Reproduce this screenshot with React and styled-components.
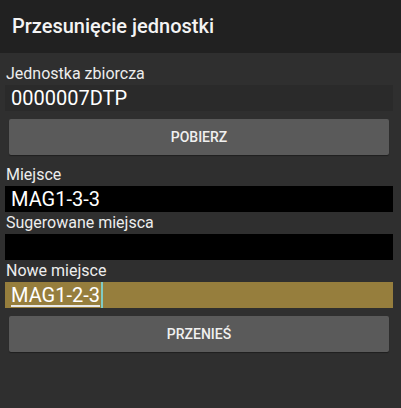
import styled, { createGlobalStyle } from 'styled-components'

const GlobalStyle = createGlobalStyle`
	html, body {
		margin: 0;
		padding: 0;
		background: #2f2f2f;
	}

	body {
		font-family: Roboto, 'Noto Sans', 'Liberation Sans', sans-serif;
		color: #f2f2f2;
	}
`

export default function App() {
	return (
		<Screen>
			<GlobalStyle />
			<Header>
				<h1>Przesunięcie jednostki</h1>
			</Header>

			<Content>
				<Label $first>Jednostka zbiorcza</Label>
				<Field $tone='plain'>
					<span>0000007DTP</span>
				</Field>
				<Button type='button'>POBIERZ</Button>

				<Label>Miejsce</Label>
				<Field $tone='black'>
					<span>MAG1-3-3</span>
				</Field>

				<Label>Sugerowane miejsca</Label>
				<Field $tone='black' />

				<Label>Nowe miejsce</Label>
				<Field $tone='gold'>
					<Composing>MAG1-2-3</Composing>
					<Caret />
				</Field>
				<Button type='button'>PRZENIEŚ</Button>
			</Content>
		</Screen>
	)
}

const tones = {
	plain: '#2a2a2a',
	black: '#000000',
	gold: '#967e3d',
}

const Screen = styled.div`
	width: 401px;
	height: 408px;
	background-color: #2f2f2f;
	display: flex;
	flex-direction: column;
	overflow: hidden;
`

const Header = styled.header`
	height: 53px;
	background-color: #212121;
	display: flex;
	align-items: center;
	padding: 0 12px 1px;
	box-sizing: border-box;

	h1 {
		margin: 0;
		font-size: 20px;
		font-weight: 500;
		color: #f4f4f4;
	}
`

const Content = styled.main`
	display: flex;
	flex-direction: column;
	padding: 10px 8px 0 5px;
`

const Label = styled.label`
	display: block;
	font-size: 16px;
	line-height: 22px;
	color: #ededed;
	padding-left: 1px;
	margin-top: ${({ $first }) => ($first ? '0' : '9px')};
`

const Field = styled.div`
	height: 26px;
	background-color: ${({ $tone }) => tones[$tone]};
	display: flex;
	align-items: stretch;
	padding-left: 6px;
	font-size: 20px;
	line-height: 26px;
	color: #ffffff;

	& + ${Label} {
		margin-top: 0;
	}
`

const Composing = styled.span`
	text-decoration: underline;
	text-decoration-thickness: 2px;
	text-underline-offset: 3px;
	text-decoration-color: #e8e8e8;
`

const Caret = styled.span`
	width: 2px;
	background-color: #80cbc4;
	margin-left: 1px;
`

const Button = styled.button`
	margin: 8px 4px 0 4px;
	height: 36px;
	border: none;
	border-radius: 2px;
	background-color: #5a5a5a;
	box-shadow: 0 1px 1px rgba(0, 0, 0, 0.35);
	color: #f0f0f0;
	font-family: Roboto, 'Noto Sans', 'Liberation Sans', sans-serif;
	font-size: 14px;
	font-weight: 500;
	cursor: pointer;
`
